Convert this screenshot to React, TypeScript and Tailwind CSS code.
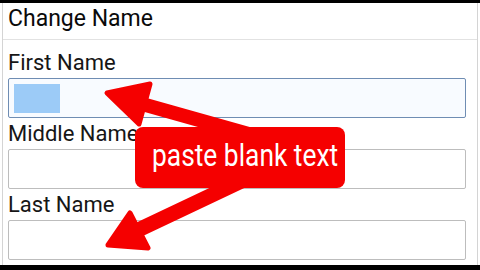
import React from "react";

const Field = ({ label, active }: { label: string; active?: boolean }) => (
  <div className="flex flex-col">
    <div className="h-[26px] mb-[2px] text-[22px] leading-[26px] text-[#161616] whitespace-nowrap">{label}</div>
    {active ? (
      <div className="h-[40px] w-[458px] rounded-[2px] border border-[#6f8db3] bg-[#f8fbff] pl-[5px] pt-[5px]">
        <div className="h-[29px] w-[46px] bg-[#9ccbf7]" />
      </div>
    ) : (
      <div className="h-[40px] w-[458px] rounded-[2px] border border-[#bdbdbd] bg-white" />
    )}
  </div>
);

export default function App() {
  return (
    <div className="relative w-[480px] h-[270px] overflow-hidden bg-black" style={{ fontFamily: "Roboto, 'Liberation Sans', sans-serif" }}>
      <div className="mt-[3px] h-[262px] bg-white">
        <div className="ml-[2px] w-[476px] h-full border-l border-r border-[#d4d4d4]">
          <div className="h-[37px] border-b border-[#e2e2e2] pl-[5px] pt-[1px] text-[23px] leading-[30px] text-[#0a0a0a] whitespace-nowrap">
            Change Name
          </div>
          <div className="pl-[5px] pt-[10px] flex flex-col gap-[3px]">
            <Field label="First Name" active />
            <Field label="Middle Name" />
            <Field label="Last Name" />
          </div>
        </div>
      </div>

      <svg className="absolute left-0 top-0" width="480" height="270" viewBox="0 0 480 270">
        <g fill="#f50000" stroke="#f50000" strokeLinejoin="round" strokeLinecap="round">
          <line x1="135" y1="102" x2="270" y2="140" strokeWidth="14" />
          <polygon points="107,93 150,84 139,124" strokeWidth="5" />
          <line x1="136" y1="231" x2="250" y2="177" strokeWidth="15" />
          <polygon points="108,245 130,213 148,248" strokeWidth="5" />
        </g>
      </svg>

      <div className="absolute left-[135px] top-[127px] w-[210px] h-[61px] rounded-[8px] bg-[#f50000] pl-[17px] pt-[13px]">
        <span className="inline-block origin-left scale-x-[0.85] text-[31px] leading-[31px] text-white whitespace-nowrap">
          paste blank text
        </span>
      </div>
    </div>
  );
}
